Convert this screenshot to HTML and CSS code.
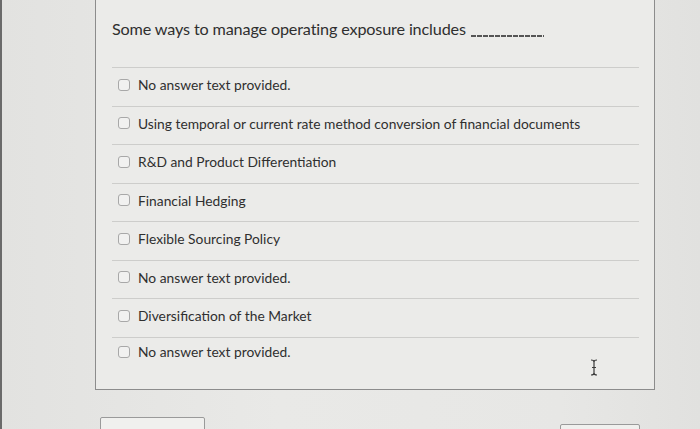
FILE: index.html
```html
<!DOCTYPE html>
<html>
<head>
<meta charset="utf-8">
<link rel="stylesheet" href="styles.css">
</head>
<body>
<div class="page">
  <div class="card">
    <div class="question">Some ways to manage operating exposure includes <span class="blank"></span></div>
    <ul class="options">
      <li class="option"><span class="box"></span><span>No answer text provided.</span></li>
      <li class="option"><span class="box"></span><span>Using temporal or current rate method conversion of financial documents</span></li>
      <li class="option"><span class="box"></span><span>R&amp;D and Product Differentiation</span></li>
      <li class="option"><span class="box"></span><span>Financial Hedging</span></li>
      <li class="option"><span class="box"></span><span>Flexible Sourcing Policy</span></li>
      <li class="option"><span class="box"></span><span>No answer text provided.</span></li>
      <li class="option"><span class="box"></span><span>Diversification of the Market</span></li>
      <li class="option last"><span class="box"></span><span>No answer text provided.</span></li>
    </ul>
    <svg class="cursor" width="10" height="17" viewBox="0 0 10 17">
      <path d="M2 1 Q5 1 5 3 Q5 1 8 1 M5 3 V14 Q5 16 2 16 M5 14 Q5 16 8 16 M3 8.5 H7" fill="none" stroke="#3a3a3a" stroke-width="1.2"/>
    </svg>
  </div>
  <div class="buttons">
    <div class="btn btn-left"></div>
    <div class="btn btn-right"></div>
  </div>
</div>
</body>
</html>
```
FILE: styles.css
```css
html, body {
  margin: 0;
  padding: 0;
}
body {
  width: 700px;
  height: 429px;
  overflow: hidden;
  background: linear-gradient(90deg, #e2e2e0 0%, #e9e9e7 40%, #e7e7e5 80%, #e1e1df 100%);
  font-family: Lato, "Noto Sans", sans-serif;
  color: #2f2f2f;
}
.page {
  height: 429px;
  border-left: 2px solid #6a6a6a;
  padding-left: 93px;
  box-sizing: border-box;
}
.card {
  position: relative;
  width: 560px;
  box-sizing: border-box;
  border: 1px solid #8c8c8c;
  border-top: none;
  padding: 17px 15px 0 16px;
  height: 390px;
  background: #ebebe9;
}
.question {
  font-size: 16.2px;
  line-height: 24px;
  height: 50px;
  letter-spacing: -0.15px;
}
.blank {
  display: inline-block;
  width: 73px;
  height: 2px;
  margin-left: 1px;
  background: repeating-linear-gradient(90deg, #555 0 5px, transparent 5px 6px);
  vertical-align: -2px;
}
.options {
  list-style: none;
  margin: 0;
  padding: 0;
}
.option {
  display: flex;
  align-items: center;
  gap: 8px;
  padding-bottom: 4px;
  box-sizing: content-box;
  height: 33.5px;
  border-top: 1px solid #cdcdcb;
  font-size: 13.8px;
  padding-left: 6px;
}
.option.last {
  height: 28px;
}
.box {
  width: 10px;
  height: 10px;
  border: 1px solid #a8a8a8;
  border-radius: 3px;
  background: #f1f1f0;
  flex: none;
}
.cursor {
  position: absolute;
  left: 493px;
  top: 359px;
}
.buttons {
  display: flex;
  justify-content: space-between;
  width: 540px;
  margin: 27px 0 0 5px;
}
.btn {
  height: 20px;
  border: 1px solid #9a9a9a;
  border-radius: 2px;
  background: #f0f0ee;
}
.btn-left {
  width: 103px;
}
.btn-right {
  width: 78px;
  margin-top: 7px;
}
```
